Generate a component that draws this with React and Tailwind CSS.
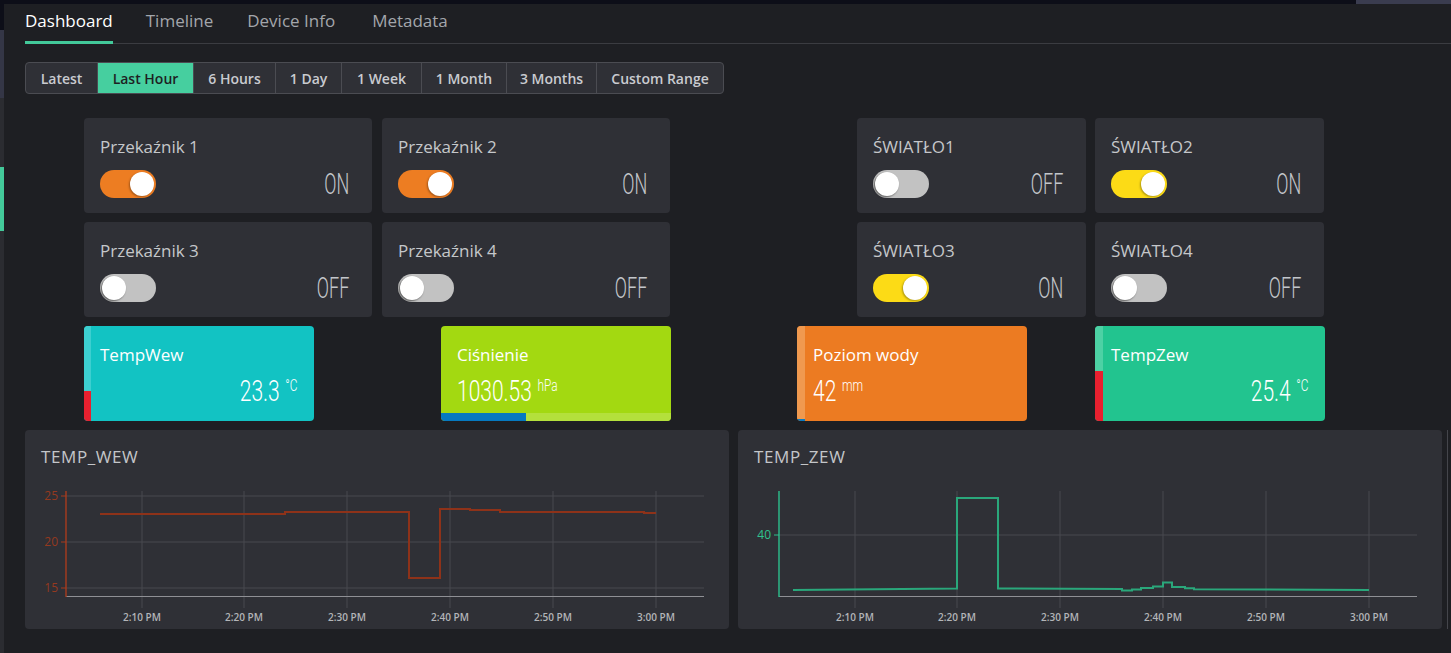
import React from "react";

const tabs = [
  { t: "Dashboard", m: "" },
  { t: "Timeline", m: "ml-[33px]" },
  { t: "Device Info", m: "ml-[34px]" },
  { t: "Metadata", m: "ml-[37px]" },
];
const ranges = [
  { label: "Latest", w: "w-[71px]" },
  { label: "Last Hour", w: "w-[96px]", active: true },
  { label: "6 Hours", w: "w-[82px]" },
  { label: "1 Day", w: "w-[66px]" },
  { label: "1 Week", w: "w-[80px]" },
  { label: "1 Month", w: "w-[85px]" },
  { label: "3 Months", w: "w-[90px]" },
  { label: "Custom Range", w: "w-[127px]" },
];

function Toggle({ on, color }) {
  return (
    <div
      className={`w-[56px] h-[28px] rounded-full flex items-center px-[2px] ${
        on ? "justify-end " + color : "justify-start bg-[#c2c2c2]"
      }`}
    >
      <div
        className={`w-[24px] h-[24px] rounded-full bg-white ${
          on
            ? "shadow-[-1px_1px_2px_rgba(0,0,0,0.3)]"
            : "shadow-[-1px_1px_2px_rgba(0,0,0,0.55)]"
        }`}
      />
    </div>
  );
}

function SwitchCard({ title, on, color }) {
  return (
    <div className="h-[95px] rounded-[4px] bg-[#2f3036] pt-[18px] pl-[16px] pr-[23px] flex flex-col">
      <div className="text-[17px] leading-[22px] text-[#c5c7ca]">{title}</div>
      <div className="mt-[12px] h-[28px] flex items-center justify-between">
        <Toggle on={on} color={color} />
        <div className="font-['Roboto',sans-serif] font-light text-[29px] leading-[28px] text-[#c3c6cb] origin-right scale-x-[0.62]">
          {on ? "ON" : "OFF"}
        </div>
      </div>
    </div>
  );
}

function Value({ num, unit, right }) {
  return (
    <div className={`mt-[8px] flex ${right ? "justify-end" : "justify-start"}`}>
      <div
        className={`flex items-start text-white font-['Roboto',sans-serif] font-light scale-x-[0.7] ${
          right ? "origin-right" : "origin-left"
        }`}
      >
        <span className="text-[30px] leading-[34px]">{num}</span>
        <span className="text-[17px] leading-[17px] mt-[3px] ml-[8px]">{unit}</span>
      </div>
    </div>
  );
}

function ChartCard({ title, children }) {
  return (
    <div className="w-[704px] h-[199px] rounded-[4px] bg-[#2f3036] flex flex-col">
      <div className="h-[48px] pt-[16px] pl-[16px] text-[17px] leading-[22px] tracking-[0.6px] text-[#c4c6c9]">
        {title}
      </div>
      <svg width="704" height="151" viewBox="0 0 704 151" className="block">
        {children}
      </svg>
    </div>
  );
}

const vx = [117, 219, 322, 425, 528, 631];
const xl = ["2:10 PM", "2:20 PM", "2:30 PM", "2:40 PM", "2:50 PM", "3:00 PM"];

function Axes({ hy, labels, axisColor, labelColor }) {
  return (
    <g>
      {hy.map((y) => (
        <line key={"h" + y} x1="41" x2="679" y1={y} y2={y} stroke="#48494e" strokeWidth="1" />
      ))}
      {vx.map((x) => (
        <line key={"v" + x} x1={x} x2={x} y1="13" y2="130" stroke="#48494e" strokeWidth="1" />
      ))}
      <line x1="41" x2="679" y1="118.5" y2="118.5" stroke="#8f9095" strokeWidth="1.2" />
      <line x1="41" x2="41" y1="13" y2="119" stroke={axisColor} strokeWidth="1.4" />
      {hy.map((y, i) => (
        <g key={"t" + y}>
          <line x1="36" x2="41" y1={y} y2={y} stroke={axisColor} strokeWidth="1" />
          <text
            x="33"
            y={y + 4}
            textAnchor="end"
            fontSize="12"
            fill={labelColor}
            fontFamily="Open Sans, sans-serif"
          >
            {labels[i]}
          </text>
        </g>
      ))}
      {vx.map((x, i) => (
        <text
          key={"xl" + x}
          x={x}
          y="143"
          textAnchor="middle"
          fontSize="10"
          fontWeight="600"
          fill="#b3b5b8"
          fontFamily="Open Sans, sans-serif"
        >
          {xl[i]}
        </text>
      ))}
    </g>
  );
}

export default function App() {
  return (
    <div className="w-[1451px] h-[653px] bg-[#1e1f23] flex overflow-hidden font-['Open_Sans',sans-serif]">
      {/* left strip */}
      <div className="w-[4px] flex flex-col shrink-0">
        <div className="h-[30px] bg-[#0d0e18]" />
        <div className="h-[68px] bg-[#343646]" />
        <div className="h-[69px] bg-[#2b2c31]" />
        <div className="h-[64px] bg-[#43c99a]" />
        <div className="flex-1 bg-[#2b2c31]" />
      </div>

      <div className="flex-1 flex flex-col">
        {/* top band */}
        <div className="h-[4px] flex">
          <div className="flex-1 bg-[#0d0e18]" />
          <div className="w-[95px] bg-[#3a3c4f]" />
        </div>

        <div className="pl-[21px] flex flex-col">
          {/* tabs */}
          <div className="h-[40px] border-b border-[#3b3c41] flex">
            {tabs.map((t, i) => (
              <div
                key={t.t}
                className={`relative pt-[5px] text-[17px] leading-[24px] ${t.m} ${
                  i === 0 ? "text-white" : "text-[#a3a6ab]"
                }`}
              >
                {t.t}
                {i === 0 && (
                  <div className="absolute left-0 right-0 bottom-[-1px] h-[3px] bg-[#43c99a]" />
                )}
              </div>
            ))}
          </div>

          {/* range buttons */}
          <div className="mt-[18px] flex">
            <div className="flex h-[32px] border border-[#4b4c52] rounded-[4px] overflow-hidden bg-[#2f3036]">
              {ranges.map((r, i) => (
                <div
                  key={r.label}
                  className={`${r.w} flex items-center justify-center text-[14px] font-semibold ${
                    i > 0 ? "border-l border-[#4b4c52]" : ""
                  } ${r.active ? "bg-[#46cf9f] text-[#1e1f23]" : "text-[#c9cbd0]"}`}
                >
                  {r.label}
                </div>
              ))}
            </div>
          </div>

          {/* switches */}
          <div className="mt-[24px] flex">
            <div className="ml-[59px] grid grid-cols-[288px_288px] gap-x-[10px] gap-y-[9px]">
              <SwitchCard title="Przekaźnik 1" on color="bg-[#ed7d22]" />
              <SwitchCard title="Przekaźnik 2" on color="bg-[#ed7d22]" />
              <SwitchCard title="Przekaźnik 3" on={false} />
              <SwitchCard title="Przekaźnik 4" on={false} />
            </div>
            <div className="ml-[187px] grid grid-cols-[229px_229px] gap-x-[9px] gap-y-[9px]">
              <SwitchCard title="ŚWIATŁO1" on={false} />
              <SwitchCard title="ŚWIATŁO2" on color="bg-[#fcdb16]" />
              <SwitchCard title="ŚWIATŁO3" on color="bg-[#fcdb16]" />
              <SwitchCard title="ŚWIATŁO4" on={false} />
            </div>
          </div>

          {/* value cards */}
          <div className="mt-[9px] flex">
            <div className="ml-[59px] w-[230px] h-[95px] rounded-[4px] overflow-hidden flex bg-[#12c3c3]">
              <div className="w-[7px] flex flex-col">
                <div className="flex-1 bg-[#3dcfd0]" />
                <div className="h-[30px] bg-[#e8202f]" />
              </div>
              <div className="flex-1 flex flex-col pt-[18px] pl-[9px] pr-[16px]">
                <div className="text-[17px] leading-[22px] text-white">TempWew</div>
                <Value num="23.3" unit="°C" right />
              </div>
            </div>

            <div className="ml-[127px] w-[230px] h-[95px] rounded-[4px] overflow-hidden flex flex-col bg-[#a3d911]">
              <div className="flex-1 flex flex-col pt-[18px] pl-[16px] pr-[16px]">
                <div className="text-[17px] leading-[22px] text-white">Ciśnienie</div>
                <Value num="1030.53" unit="hPa" />
              </div>
              <div className="h-[8px] flex">
                <div className="w-[85px] bg-[#0679c0]" />
                <div className="flex-1 bg-[#b4e03c]" />
              </div>
            </div>

            <div className="ml-[126px] w-[230px] h-[95px] rounded-[4px] overflow-hidden flex bg-[#ec7b22]">
              <div className="w-[8px] flex flex-col">
                <div className="flex-1 bg-[#f0994f]" />
                <div className="h-[2px] bg-[#0a7bc1]" />
              </div>
              <div className="flex-1 flex flex-col pt-[18px] pl-[8px] pr-[16px]">
                <div className="text-[17px] leading-[22px] text-white">Poziom wody</div>
                <Value num="42" unit="mm" />
              </div>
            </div>

            <div className="ml-[68px] w-[230px] h-[95px] rounded-[4px] overflow-hidden flex bg-[#22c48f]">
              <div className="w-[8px] flex flex-col">
                <div className="flex-1 bg-[#4dd1a4]" />
                <div className="h-[50px] bg-[#e8202f]" />
              </div>
              <div className="flex-1 flex flex-col pt-[18px] pl-[8px] pr-[16px]">
                <div className="text-[17px] leading-[22px] text-white">TempZew</div>
                <Value num="25.4" unit="°C" right />
              </div>
            </div>
          </div>

          {/* charts */}
          <div className="mt-[9px] flex gap-[9px]">
            <ChartCard title="TEMP_WEW">
              <Axes
                hy={[18, 64, 110]}
                labels={["25", "20", "15"]}
                axisColor="#a83b1d"
                labelColor="#94391f"
              />
              <path
                d="M75 36 H260 V34 H384 V100 H415 V31 H445 V32 H475 V34 H619 V35 H631"
                fill="none"
                stroke="#8e3219"
                strokeWidth="2"
              />
            </ChartCard>
            <ChartCard title="TEMP_ZEW">
              <Axes hy={[57]} labels={["40"]} axisColor="#2cc08d" labelColor="#2fc28e" />
              <path
                d="M55 112 L219 110.5 V20 H260 V110.5 L384 111 V112.5 H394 V111.5 H403 V110 H415 V108.5 H425 V104.5 H434 V109 H447 V110.3 H456 V111.3 L631 112"
                fill="none"
                stroke="#2aa77b"
                strokeWidth="2"
              />
            </ChartCard>
            <div className="ml-[-4px] w-[1px] bg-[#44454b]" />
          </div>
        </div>
      </div>
    </div>
  );
}
